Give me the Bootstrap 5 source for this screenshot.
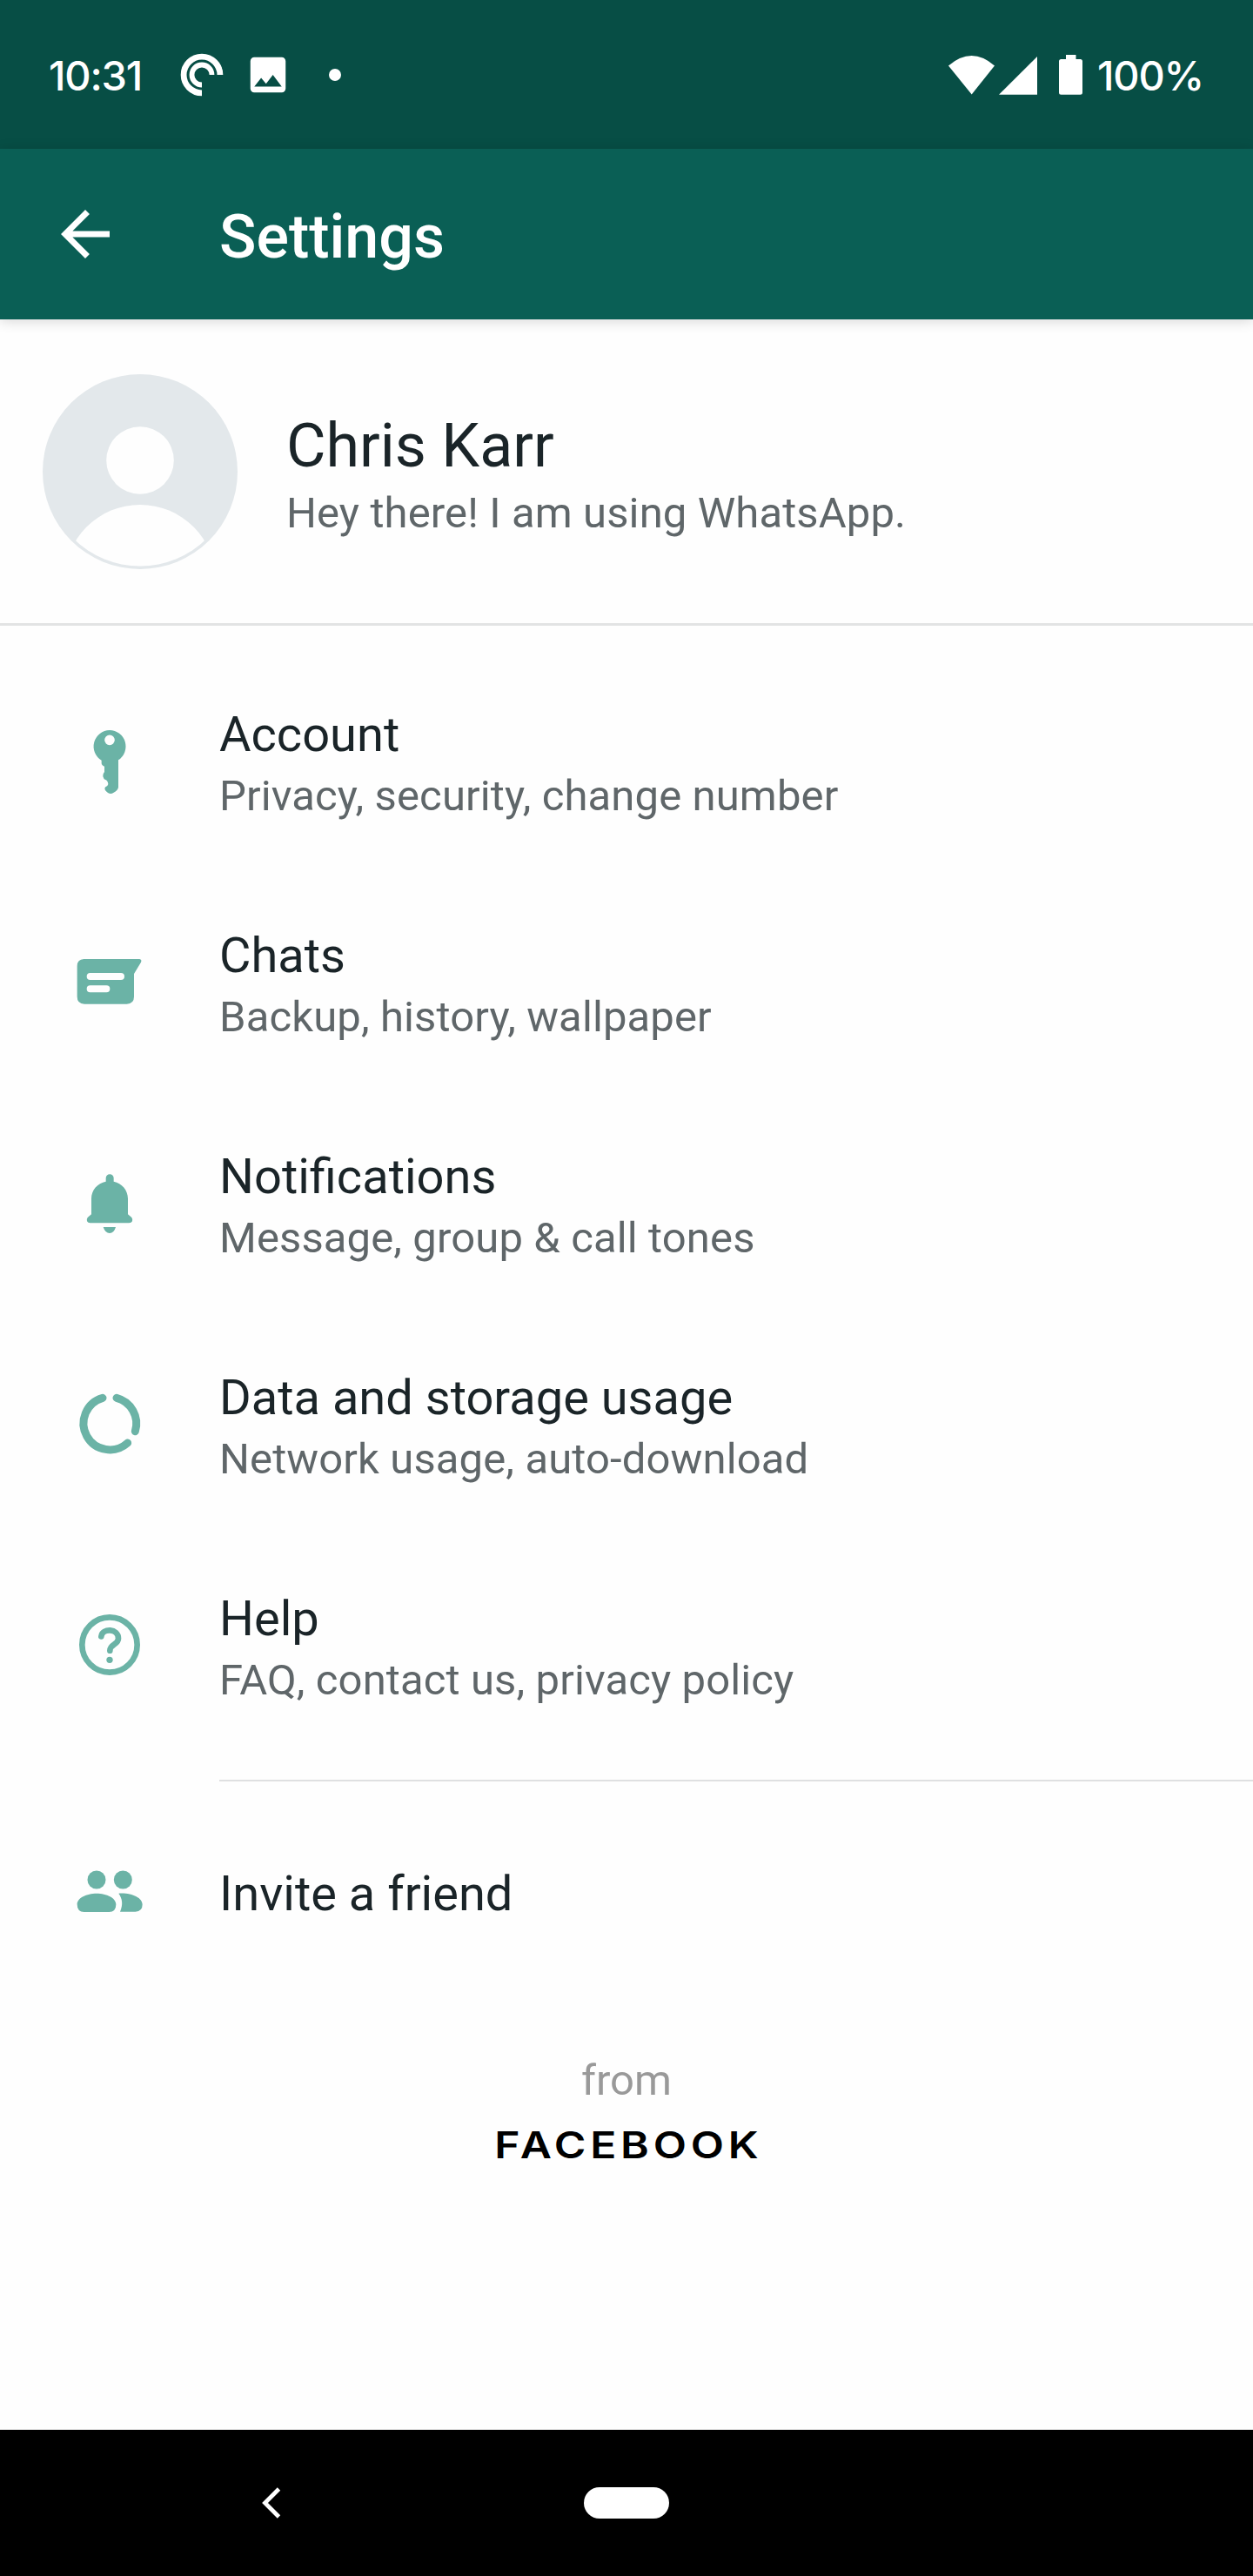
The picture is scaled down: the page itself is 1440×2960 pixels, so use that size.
<!DOCTYPE html>
<html lang="en">
<head>
<meta charset="utf-8">
<meta name="viewport" content="width=device-width, initial-scale=1">
<title>Settings</title>
<link href="https://cdn.jsdelivr.net/npm/bootstrap@5.3.0/dist/css/bootstrap.min.css" rel="stylesheet">
<style>
  body { font-family: Roboto, "Liberation Sans", sans-serif; background: #fefefe; color: #1a2428; }
  svg { display: block; flex: none; }
  .screen { width: 1440px; height: 2960px; overflow: hidden; }
  .status-bar { height: 171px; background: #074e45; padding: 0 54px 0 56px; color: #fff; }
  .status-text { font-family: Inter, sans-serif; font-size: 47px; line-height: 58px; padding-top: 3px; font-weight: 500; white-space: nowrap; }
  .clock { width: 151px; letter-spacing: -1.2px; }
  .charge { width: 125px; letter-spacing: -1.2px; }
  .app-bar { height: 196px; background: #0a5f55; padding-left: 56px; box-shadow: 0 2px 14px rgba(0,0,0,.16); position: relative; }
  .app-title { margin: 5px 0 0 112px; font-size: 70px; line-height: 82px; font-weight: 500; color: #fff; }
  .profile { height: 352px; border-bottom: 3px solid #e2e3e4; padding-left: 49px; }
  .profile-text { margin-left: 56px; padding-top: 7px; }
  .profile-name { font-size: 70px; line-height: 82px; margin-bottom: 8px; }
  .sub-text { font-size: 49px; line-height: 58px; letter-spacing: .12px; color: #5f6669; white-space: nowrap; }
  .settings-list { padding-top: 29px; }
  .setting { height: 254px; padding-left: 84px; }
  .setting-text { margin-left: 84px; padding-top: 5px; }
  .setting-title { font-size: 56px; line-height: 66px; margin-bottom: 9px; white-space: nowrap; }
  .setting svg, .invite svg { width: 84px; height: 84px; color: #6bb3a6; }
  .divider { margin: 27px 0 0 252px; height: 2px; background: #dfe0e1; }
  .invite { height: 252px; padding-left: 84px; }
  .invite .setting-title { margin: 6px 0 0 84px; }
  .brand { padding-top: 63px; }
  .from-label { font-size: 49px; line-height: 58px; color: #999; }
  .company { font-family: Inter, sans-serif; font-size: 42px; font-weight: 600; line-height: 52px; letter-spacing: 4px; color: #000; margin-top: 19px; padding-left: 4px; transform: scaleX(1.185); }
  .nav-keys { height: 168px; background: #000; padding-left: 301px; }
  .home-pill { width: 98px; height: 36px; margin-left: 348px; background: #fff; }
</style>
<script src="https://cdn.jsdelivr.net/npm/bootstrap@5.3.0/dist/js/bootstrap.bundle.min.js"></script>
</head>
<body>
<div class="screen d-flex flex-column">
  <header>
    <div class="status-bar d-flex align-items-center">
      <div class="status-text clock">10:31</div>
      <svg width="50" height="50" viewBox="-25 -25 50 50" fill="none" stroke="#fff"><path d="M20.9 0A20.9 20.9 0 1 0 0 20.9" stroke-width="6.8"/><path d="M11.5 0A11.5 11.5 0 1 0 0 11.5" stroke-width="5.8"/></svg>
      <svg class="ms-4" width="54" height="54" viewBox="0 0 24 24" fill="#fff"><path d="M21 19V5c0-1.1-.9-2-2-2H5c-1.1 0-2 .9-2 2v14c0 1.1.9 2 2 2h14c1.1 0 2-.9 2-2zM8.5 13.5l2.500 3.010L14.500 12l4.500 6H5l3.500-4.500z"/></svg>
      <svg width="100" height="14" viewBox="0 0 100 14" fill="#fff"><circle cx="50" cy="7" r="7"/></svg>
      <svg class="ms-auto" width="156" height="46" viewBox="1090 62 156 46" fill="#fff"><path d="M1091 74.5Q1117.7 51.5 1144 74.5L1117.7 107.5Z"/><path d="M1149 107.7L1193 64V107.7Z"/><path d="M1226 62h11.500v5h5q2.500 0 2.500 2.500v35.700q0 2.500-2.500 2.500h-22q-2.500 0-2.500-2.500V69.500q0-2.500 2.500-2.500h5.500z"/></svg>
      <div class="status-text charge ms-3">100%</div>
    </div>
    <div class="app-bar d-flex align-items-center">
      <svg width="84" height="84" viewBox="0 0 24 24" fill="#fff"><path d="M20 11H7.830l5.590-5.590L12 4l-8 8 8 8 1.410-1.410L7.830 13H20v-2z"/></svg>
      <h1 class="app-title">Settings</h1>
    </div>
  </header>

  <section class="profile d-flex align-items-center">
    <svg width="224" height="224" viewBox="0 0 224 224"><defs><clipPath id="face"><circle cx="112" cy="112" r="108.500"/></clipPath></defs><circle cx="112" cy="112" r="112" fill="#e3e8eb"/><g fill="#fefefe" clip-path="url(#face)"><circle cx="112" cy="99" r="38.800"/><circle cx="112" cy="237" r="87"/></g></svg>
    <div class="profile-text">
      <div class="profile-name">Chris Karr</div>
      <div class="sub-text">Hey there! I am using WhatsApp.</div>
    </div>
  </section>

  <main class="flex-grow-1">
    <div class="settings-list">
      <div class="setting d-flex align-items-center">
        <svg viewBox="72 159 252 252" fill="currentColor"><path fill-rule="evenodd" d="M198 177a56 56 0 0 1 30 103V374Q226 385 212 392Q200 400 189 391Q181 386 181 377Q182 372 190 369Q195 362 191 355Q189 349 179 346Q172 337 176 328Q182 322 180 316V302Q170 298 170 291V281A56 56 0 0 1 198 177ZM198 193.500a17.500 17.500 0 1 0 0 35a17.500 17.500 0 1 0 0-35Z"/></svg>
        <div class="setting-text"><div class="setting-title">Account</div><div class="sub-text">Privacy, security, change number</div></div>
      </div>
      <div class="setting d-flex align-items-center">
        <svg viewBox="72 921 252 252" fill="currentColor"><path fill-rule="evenodd" d="M109 966H301Q310 968 306 977L282 1017V1096Q282 1121 257 1121H111Q86 1121 86 1096V990Q86 968 109 966ZM131 1014a12 12 0 0 0 0 24H237a12 12 0 0 0 0-24ZM131 1057a12 12 0 0 0 0 24H187a12 12 0 0 0 0-24Z"/></svg>
        <div class="setting-text"><div class="setting-title">Chats</div><div class="sub-text">Backup, history, wallpaper</div></div>
      </div>
      <div class="setting d-flex align-items-center">
        <svg viewBox="72 123 252 252" fill="currentColor"><path d="M185 173V161a13.500 13.500 0 0 1 27 0V173C240 179 261 202 261 232V286L274 297Q278 302 276 310Q273 316 265 316H131Q123 316 120 310Q118 302 122 297L135 286V232C135 202 156 179 185 173ZM176 330H219Q213 351 198 351Q183 351 176 330Z"/></svg>
        <div class="setting-text"><div class="setting-title">Notifications</div><div class="sub-text">Message, group &amp; call tones</div></div>
      </div>
      <div class="setting d-flex align-items-center">
        <svg viewBox="72 885 252 252" fill="none" stroke="currentColor" stroke-width="27" stroke-linecap="round"><path d="M222 919A91 91 0 0 1 286 1034"/><path d="M174 919A91 91 0 1 0 260 1074"/></svg>
        <div class="setting-text"><div class="setting-title">Data and storage usage</div><div class="sub-text">Network usage, auto-download</div></div>
      </div>
      <div class="setting d-flex align-items-center">
        <svg viewBox="72 147 252 252" fill="none" stroke="currentColor" stroke-width="20" stroke-linecap="round"><circle cx="198" cy="270" r="95"/><path d="M169 241C173 212 228 212 228 248C228 270 199 267 199 290"/><circle cx="198" cy="322" r="11" fill="currentColor" stroke="none"/></svg>
        <div class="setting-text"><div class="setting-title">Help</div><div class="sub-text">FAQ, contact us, privacy policy</div></div>
      </div>
    </div>
    <div class="divider"></div>
    <div class="invite d-flex align-items-center">
      <svg viewBox="72 993 252 252" fill="currentColor"><circle cx="153" cy="1080" r="31.500"/><circle cx="244" cy="1080" r="31.500"/><path d="M153 1127C187 1127 220 1142 220 1165Q220 1191 196 1191H110Q86 1191 86 1165C86 1142 119 1127 153 1127ZM229 1127C274 1124 311 1142 311 1165Q311 1190 287 1190H234C245 1165 242 1145 229 1127Z"/></svg>
      <div class="setting-title">Invite a friend</div>
    </div>
    <footer class="brand text-center">
      <div class="from-label">from</div>
      <div class="company">FACEBOOK</div>
    </footer>
  </main>

  <nav class="nav-keys d-flex align-items-center">
    <svg width="22" height="36" viewBox="0 0 22 36" fill="none" stroke="#fff" stroke-width="4.800"><path d="M19.500 2L3.500 18L19.500 34"/></svg>
    <div class="home-pill rounded-pill"></div>
  </nav>
</div>
</body>
</html>
